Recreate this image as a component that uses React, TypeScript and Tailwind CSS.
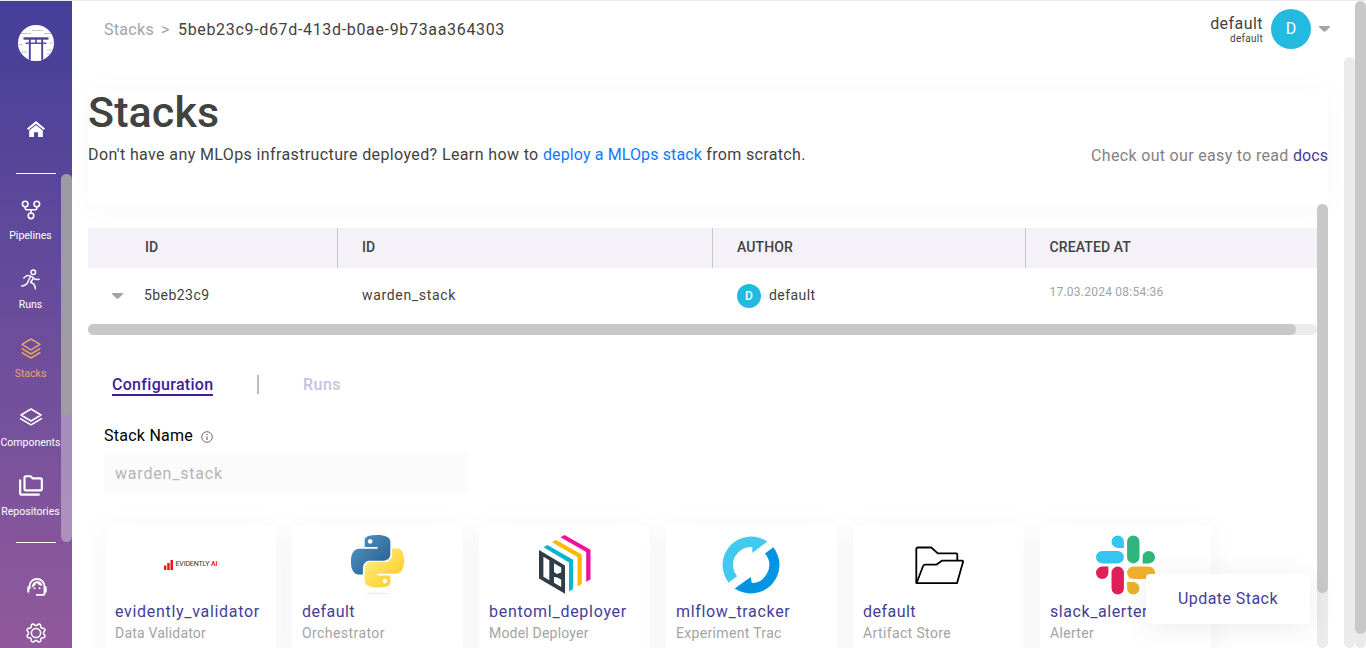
import type { ReactNode } from "react";
import { MdOutlineFolderCopy } from "react-icons/md";

function Logo() {
  return (
    <svg width="36" height="36" viewBox="0 0 36 36" className="block">
      <circle cx="18" cy="18" r="18" fill="#fff" />
      <g stroke="#4d429b" fill="none">
        <path d="M14 5.5h11M3 8.5h10M26 8.500h7M1 19.500h4M31 18h4M28.500 25h6M3 27h6M29 29h3" strokeWidth=".7" opacity=".5" />
        <path d="M5.500 13.500h25" strokeWidth="2.400" />
        <path d="M7.500 18.200h21" strokeWidth="1.400" />
        <path d="M11.800 14v20.700M24.200 14v20.700" strokeWidth="1.900" />
        <path d="M18 14v4" strokeWidth="1.600" />
      </g>
      <path d="M13.200 19.500h9.600V35.500h-9.600z" fill="#fff" />
    </svg>
  );
}

function HomeIcon() {
  return (
    <svg width="18" height="16" viewBox="0 0 18 16" fill="#fff">
      <path d="M9 0 0 7.500l1.300 1.500L9 2.700 16.700 9 18 7.500z" />
      <path d="M2.200 9.600 9 4.100l6.800 5.500V16h-4.700v-4.800H7V16H2.200z" />
    </svg>
  );
}

function PipelinesIcon() {
  return (
    <svg width="20" height="20" viewBox="0 0 20 20" fill="none" stroke="#fff" strokeWidth="1.600">
      <circle cx="4.200" cy="4" r="2.800" />
      <circle cx="15.800" cy="4" r="2.800" />
      <circle cx="10" cy="15.800" r="2.800" />
      <path d="M4.200 6.800v1.400c0 1 .6 1.600 1.600 1.600h8.400c1 0 1.600-.6 1.600-1.600V6.800M10 9.800V13" />
    </svg>
  );
}

function RunsIcon() {
  return (
    <svg width="20" height="21" viewBox="0 0 20 21" fill="none" stroke="#fff" strokeWidth="1.500" strokeLinecap="round" strokeLinejoin="round">
      <circle cx="12.300" cy="3.200" r="2.300" />
      <path d="M2.800 9 5.500 6.700c1-.6 2.300-.3 3.600.2 1.800.7 3 1.400 4 2.600 1 1 2.600 1.200 5 .7" />
      <path d="M9.500 7.500 7.300 12c-.8 2.300-2.300 4.800-6.600 4.900" />
      <path d="M12.300 9.500 9.500 13.500c3 .4 4.500 2 4.900 6.200" />
    </svg>
  );
}

function StacksIcon() {
  return (
    <svg width="20" height="21" viewBox="0 0 20 21" fill="none" stroke="#e8a561" strokeWidth="1.500" strokeLinejoin="round">
      <path d="M10 1 19 6.400 10 11.800 1 6.400z" />
      <path d="M.6 10.300 10 16l9.400-5.700M.6 14.300 10 20l9.400-5.700" />
    </svg>
  );
}

function ComponentsIcon() {
  return (
    <svg width="24" height="18" viewBox="0 0 24 18" fill="none" stroke="#fff" strokeWidth="1.500" strokeLinejoin="round">
      <path d="M12 1 22 7 12 13 2 7z" />
      <path d="M1 10.300 12 16.800l11-6.500" />
    </svg>
  );
}

function SupportIcon() {
  return (
    <svg width="20" height="18" viewBox="0 0 20 18" fill="none" stroke="#fff" className="block shrink-0">
      <path d="M2.500 11V8.500C2.500 4 5.800 1 10 1s7.500 3 7.500 7.500V15c0 1.200-.6 1.900-1.800 1.900H9" strokeWidth="1.900" />
      <path d="M1.300 9.200v4.600M18.700 9.200v4.600" strokeWidth="2" strokeLinecap="round" />
      <path d="M4.600 9.500C5 5.500 7.300 3.200 10.300 3.200c2.700 0 4.800 1.700 5.200 4.600-2.600 0-4.500-1.100-5.800-3.200C8.900 7 7.200 8.700 4.600 9.500z" fill="#fff" stroke="none" />
      <circle cx="7.500" cy="10.200" r="1" fill="#fff" stroke="none" />
      <circle cx="12.600" cy="10.200" r="1" fill="#fff" stroke="none" />
    </svg>
  );
}

// Outline of an eight-lobed cog centred on the origin.
const cogPath =
  Array.from({ length: 96 }, (_, i) => {
    const a = (i / 96) * Math.PI * 2;
    const wave = Math.max(-1, Math.min(1, 1.5 * Math.cos(8 * (a - Math.PI / 8))));
    const r = 8.5 + 0.95 * wave;
    return `${i ? "L" : "M"}${(r * Math.cos(a)).toFixed(2)} ${(r * Math.sin(a)).toFixed(2)}`;
  }).join("") + "Z";

function GearIcon() {
  return (
    <svg width="22" height="22" viewBox="-11 -11 22 22" fill="none" stroke="#fff" strokeWidth="1.500" strokeLinejoin="round" className="block shrink-0">
      <path d={cogPath} />
      <circle r="4.600" />
    </svg>
  );
}

function EvidentlyLogo() {
  return (
    <div className="flex h-[60px] w-[54px] items-center gap-[3px]">
      <svg width="9" height="10" viewBox="0 0 9 10" fill="#f5141b" className="shrink-0">
        <path d="M0 5.500h2.300V10H0zM3.200 3h2.500v7H3.200zM6.500 0H9v10H6.500z" />
      </svg>
      <span className="text-[7px] leading-none tracking-[-0.15px] whitespace-nowrap text-[#333]">
        EVIDENTLY <span className="font-medium text-[#ed0500]">AI</span>
      </span>
    </div>
  );
}

function PythonLogo() {
  return (
    <svg width="53" height="60" viewBox="0 0 24 27.200">
      <defs>
        <linearGradient id="pyBlue" x1="0" y1="0" x2="1" y2="1">
          <stop offset=".1" stopColor="#4f93c4" />
          <stop offset=".8" stopColor="#2b6595" />
        </linearGradient>
        <linearGradient id="pyYellow" x1="0" y1="0" x2="1" y2="1">
          <stop offset=".2" stopColor="#ffe873" />
          <stop offset=".8" stopColor="#ffd130" />
        </linearGradient>
      </defs>
      <ellipse cx="12" cy="26.500" rx="5.200" ry=".4" fill="#ececec" />
      <path fill="url(#pyBlue)" d="M14.25.18l.9.2.73.26.59.3.45.32.34.34.25.34.16.33.1.3.04.26.02.2-.01.13V8.5l-.05.63-.13.55-.21.46-.26.38-.3.31-.33.25-.35.19-.35.14-.33.1-.3.07-.26.04-.21.02H8.77l-.69.05-.59.14-.5.22-.41.27-.33.32-.27.35-.2.36-.15.37-.1.35-.07.32-.04.27-.02.21v3.06H3.17l-.21-.03-.28-.07-.32-.12-.35-.18-.36-.26-.36-.36-.35-.46-.32-.59-.28-.73-.21-.88-.14-1.05-.05-1.23.06-1.22.16-1.04.24-.87.32-.71.36-.57.4-.44.42-.33.42-.24.4-.16.36-.1.32-.05.24-.01h.16l.06.01h8.16v-.83H6.18l-.01-2.75-.02-.37.05-.34.11-.31.17-.28.25-.26.31-.23.38-.2.44-.18.51-.15.58-.12.64-.1.71-.06.77-.04.84-.02 1.27.05zm-6.3 1.98l-.23.33-.08.41.08.41.23.34.33.22.41.09.41-.09.33-.22.23-.34.08-.41-.08-.41-.23-.33-.33-.22-.41-.09-.41.09z" />
      <path fill="url(#pyYellow)" d="M21.04 5.9l.28.06.32.12.35.18.36.27.36.35.35.47.32.59.28.73.21.88.14 1.04.05 1.23-.06 1.23-.16 1.04-.24.86-.32.71-.36.57-.4.45-.42.33-.42.24-.4.16-.36.09-.32.05-.24.02-.16-.01h-8.22v.82h5.84l.01 2.76.02.36-.05.34-.11.31-.17.29-.25.25-.31.24-.38.2-.44.17-.51.15-.58.13-.64.09-.71.07-.77.04-.84.01-1.27-.04-1.07-.14-.9-.2-.73-.25-.59-.3-.45-.33-.34-.34-.25-.34-.16-.33-.1-.3-.04-.25-.02-.2.01-.13v-5.34l.05-.64.13-.54.21-.46.26-.38.3-.32.33-.24.35-.2.35-.14.33-.1.3-.06.26-.04.21-.02.13-.01h5.84l.69-.05.59-.14.5-.21.41-.28.33-.32.27-.35.2-.36.15-.36.1-.35.07-.32.04-.28.02-.21V6.07h2.09l.14.01zm-6.47 14.25l-.23.33-.08.41.08.41.23.33.33.23.41.08.41-.08.33-.23.23-.33.08-.41-.08-.41-.23-.33-.33-.23-.41-.08-.41.08z" />
    </svg>
  );
}

function BentoLogo() {
  return (
    <svg width="52" height="60" viewBox="0 0 52 60">
      <path fill="#ee1199" d="M21.500 2.300 25.500 0l26 14.700v29.800l-4.300 2.300V17z" />
      <path fill="#ffb800" d="M13 7.300 17 5l25.800 14.600V49l-4.300 2.400V22z" />
      <path fill="#06b6d4" d="M4.500 12.300 8.500 10l25.600 14.800V54L30 56.500V27.600z" />
      <path fill="#2f3d46" fillRule="evenodd" d="M0 15l26 15.500v28.200L0 43.500zM4.400 21.800v20l5.900 3.500V25.300zM15 28.300v8.800l2.900 1.800 4.300-1.500v-4.800zM15 42v5.800l7.200 4.200v-7.400l-3.900-2z" />
    </svg>
  );
}

function MlflowLogo() {
  return (
    <svg width="60" height="60" viewBox="-29 -30 60 60">
      <path fill="#43c9ed" d="M-22.300 17.700A28.500 28.500 0 0 1 16.300 -23.400L1.300 -12V-18A18 18 0 0 0 -14 11.300Z" />
      <path fill="#0194e2" d="M22.300 -17.700A28.500 28.500 0 0 1 -16.300 23.400L-.3 12 .8 18A18 18 0 0 0 14 -11.500Z" />
    </svg>
  );
}

function FolderLogo() {
  return (
    <svg width="50" height="60" viewBox="-1 -11 50 60" fill="none" stroke="#000" strokeWidth="1.800" strokeLinejoin="round">
      <path d="M1.300 37V3.200c0-1 .6-1.700 1.700-1.700h13.300L22.800 7.300h18.300c.8 0 1.200.4 1.200 1.200v6" />
      <path d="M1.500 37.200 8.100 20c.4-1 .9-1.400 2-1.400h11.500l5.700-4h19.700c.8 0 1.300.7 1 1.500l-6 21.100z" />
    </svg>
  );
}

function SlackLogo() {
  return (
    <svg width="59" height="60" viewBox="0 0 24 24">
      <path fill="#e01e5a" d="M5.042 15.165a2.528 2.528 0 0 1-2.52 2.523A2.528 2.528 0 0 1 0 15.165a2.527 2.527 0 0 1 2.522-2.52h2.52v2.52zM6.313 15.165a2.527 2.527 0 0 1 2.521-2.52 2.527 2.527 0 0 1 2.521 2.52v6.313A2.528 2.528 0 0 1 8.834 24a2.528 2.528 0 0 1-2.521-2.522v-6.313z" />
      <path fill="#36c5f0" d="M8.834 5.042a2.528 2.528 0 0 1-2.521-2.52A2.528 2.528 0 0 1 8.834 0a2.528 2.528 0 0 1 2.521 2.522v2.52H8.834zM8.834 6.313a2.528 2.528 0 0 1 2.521 2.521 2.528 2.528 0 0 1-2.521 2.521H2.522A2.528 2.528 0 0 1 0 8.834a2.528 2.528 0 0 1 2.522-2.521h6.312z" />
      <path fill="#2eb67d" d="M18.956 8.834a2.528 2.528 0 0 1 2.522-2.521A2.528 2.528 0 0 1 24 8.834a2.528 2.528 0 0 1-2.522 2.521h-2.522V8.834zM17.688 8.834a2.528 2.528 0 0 1-2.523 2.521 2.527 2.527 0 0 1-2.520-2.521V2.522A2.527 2.527 0 0 1 15.165 0a2.528 2.528 0 0 1 2.523 2.522v6.312z" />
      <path fill="#ecb22e" d="M15.165 18.956a2.528 2.528 0 0 1 2.523 2.522A2.528 2.528 0 0 1 15.165 24a2.527 2.527 0 0 1-2.520-2.522v-2.522h2.520zM15.165 17.688a2.527 2.527 0 0 1-2.520-2.523 2.526 2.526 0 0 1 2.520-2.520h6.313A2.527 2.527 0 0 1 24 15.165a2.528 2.528 0 0 1-2.522 2.523h-6.313z" />
    </svg>
  );
}

function Caret() {
  return (
    <svg width="11" height="6" viewBox="0 0 11 6" className="shrink-0" fill="#a3a3ad">
      <path d="M0 0h11v1L6.500 5.500h-2L0 1z" />
    </svg>
  );
}

function NavItem({ icon, label, active }: { icon: ReactNode; label: string; active?: boolean }) {
  return (
    <a className="flex h-[69px] w-[61px] flex-col items-center">
      <span className="flex h-6 items-center justify-center">{icon}</span>
      <span className={`mt-[7px] text-[10.5px] leading-[14px] ${active ? "text-[#e8a561]" : "text-white"}`}>{label}</span>
    </a>
  );
}

function Sidebar() {
  return (
    <aside className="flex h-full w-[72px] shrink-0 flex-col items-center overflow-hidden bg-linear-to-b from-[#443e99] to-[#91599c]">
      <div className="mt-6"><Logo /></div>
      <div className="mt-[60px]"><HomeIcon /></div>
      <div className="mt-9 h-px w-10 shrink-0 bg-white" />
      <nav className="flex h-[368px] w-full shrink-0">
        <div className="w-[61px] pt-6">
          <NavItem icon={<PipelinesIcon />} label="Pipelines" />
          <NavItem icon={<RunsIcon />} label="Runs" />
          <NavItem icon={<StacksIcon />} label="Stacks" active />
          <NavItem icon={<ComponentsIcon />} label="Components" />
          <NavItem icon={<MdOutlineFolderCopy size={26} color="#fff" />} label="Repositories" />
        </div>
        <div className="h-full w-[11px] rounded-full bg-[#ebebeb]/40">
          <div className="h-[242px] rounded-full bg-[#a0a09c]/75" />
        </div>
      </nav>
      <div className="h-px w-10 shrink-0 bg-white" />
      <div className="mt-[35px] ml-[2px] shrink-0"><SupportIcon /></div>
      <div className="mt-[26px] shrink-0"><GearIcon /></div>
    </aside>
  );
}

function Header() {
  return (
    <header className="flex h-14 items-center justify-between pt-px pr-[25px] pl-8">
      <div className="flex items-center pt-[3px] text-[16px] leading-5">
        <span className="w-[50px] tracking-[0.3px] text-[#a3a3ad]">Stacks</span>
        <span className="w-6 pl-[7px] text-[#a3a3ad]">&gt;</span>
        <span className="tracking-[0.667px] text-[#424240]">5beb23c9-d67d-413d-b0ae-9b73aa364303</span>
      </div>
      <div className="flex items-center">
        <div className="flex flex-col items-end pt-[2px] text-[#424240]">
          <span className="text-[16px] leading-[18px] tracking-[0.45px]">default</span>
          <span className="text-[10px] leading-[12px] tracking-[0.27px]">default</span>
        </div>
        <div className="mr-2 ml-2 flex size-10 items-center justify-center rounded-full bg-[#24badf] text-[16px] text-white">D</div>
        <Caret />
      </div>
    </header>
  );
}

function StackTable() {
  return (
    <div className="text-[14px] text-[#424240]">
      <div className="flex h-10 bg-[#f4f1f9] leading-[39px] font-medium">
        <div className="w-[249px] pl-[57px]">ID</div>
        <div className="w-[375px] border-l border-[#c8c8c8] pl-6">ID</div>
        <div className="w-[313px] border-l border-[#c8c8c8] pl-6 tracking-[0.12px]">AUTHOR</div>
        <div className="grow border-l border-[#c8c8c8] pl-[23.500px] tracking-[0.12px]">CREATED AT</div>
      </div>
      <div className="flex h-14 items-center">
        <div className="flex w-[249px] items-center pl-6">
          <Caret />
          <span className="ml-[21px] tracking-[0.44px]">5beb23c9</span>
        </div>
        <div className="w-[375px] pl-[25px] tracking-[0.67px]">warden_stack</div>
        <div className="flex w-[313px] items-center pl-[25px]">
          <span className="flex size-6 items-center justify-center rounded-full bg-[#24badf] text-[12px] font-medium text-white">D</span>
          <span className="ml-2 tracking-[0.43px]">default</span>
        </div>
        <div className="-mt-[7px] pl-[24.500px] text-[12px] tracking-[0.235px] text-[#a3a3a3]">17.03.2024 08:54:36</div>
      </div>
      <div className="h-[11px] rounded-full bg-[#ebebeb]">
        <div className="h-full w-[1208px] rounded-full bg-[#c8c8c8]" />
      </div>
    </div>
  );
}

const components: { name: string; type: string; logo: ReactNode; nameClass: string; typeClass: string }[] = [
  { name: "evidently_validator", type: "Data Validator", logo: <EvidentlyLogo />, nameClass: "tracking-[0.69px]", typeClass: "tracking-[0.2px]" },
  { name: "default", type: "Orchestrator", logo: <PythonLogo />, nameClass: "tracking-[0.47px]", typeClass: "tracking-[0.43px]" },
  { name: "bentoml_deployer", type: "Model Deployer", logo: <BentoLogo />, nameClass: "tracking-[0.72px]", typeClass: "tracking-[0.2px]" },
  { name: "mlflow_tracker", type: "Experiment Trac", logo: <MlflowLogo />, nameClass: "tracking-[0.67px]", typeClass: "tracking-[0.33px]" },
  { name: "default", type: "Artifact Store", logo: <FolderLogo />, nameClass: "tracking-[0.47px]", typeClass: "tracking-[0.37px]" },
  { name: "slack_alerter", type: "Alerter", logo: <SlackLogo />, nameClass: "tracking-[0.57px]", typeClass: "tracking-[0.32px]" },
];

function ComponentCard({ name, type, logo, nameClass, typeClass }: (typeof components)[number]) {
  return (
    <div className="h-[140px] w-[171px] shrink-0 rounded-sm bg-white pt-[10px] shadow-[0_4px_30px_rgba(0,0,0,0.05)]">
      <div className="flex h-[60px] justify-center">{logo}</div>
      <div className="pl-[10px]">
        <div className={`mt-[7px] text-[16px] leading-5 text-[#443e99] ${nameClass}`}>{name}</div>
        <div className={`mt-px text-[14px] leading-5 text-[#a3a3a3] ${typeClass}`}>{type}</div>
      </div>
    </div>
  );
}

function Configuration() {
  return (
    <div className="pl-4">
      <div className="mt-[39px] flex items-start pl-2 text-[16px] font-medium">
        <span className="h-[22px] w-[101px] border-b-2 border-[#431d93] leading-[22px] tracking-[0.3px] whitespace-nowrap text-[#431d93]">Configuration</span>
        <span className="mt-[1px] ml-11 h-[19px] w-[2px] bg-[#bcbcbc]" />
        <span className="ml-11 leading-[22px] tracking-[0.47px] text-[#c6c3e0]">Runs</span>
      </div>
      <div className="mt-[30px] flex items-center text-[16px] leading-5">
        <span className="w-[97px] tracking-[0.25px] text-black">Stack Name</span>
        <svg width="12" height="12" viewBox="0 0 12 12" fill="none" stroke="#6b6b76" className="mt-[3px]">
          <circle cx="6" cy="6" r="5.300" />
          <path d="M6 5.400V9M6 3v1.200" strokeWidth="1.200" />
        </svg>
      </div>
      <div className="mt-[7px] flex h-10 w-[364px] items-center rounded bg-[#fbfbfb] pt-[2px] pl-[11px] text-[16px] tracking-[0.81px] text-[#b5b5b5]">warden_stack</div>
      <div className="mt-8 flex gap-4 pl-px">
        {components.map((c) => (
          <ComponentCard key={c.type} {...c} />
        ))}
      </div>
    </div>
  );
}

export default function App() {
  return (
    <div className="relative flex h-[648px] w-[1366px] overflow-hidden border-t border-[#e8e8ef] bg-white font-['Roboto',sans-serif]">
      <Sidebar />
      <div className="flex min-w-0 grow flex-col">
        <Header />
        <div className="flex min-h-0 grow">
          <main className="flex w-[1272px] flex-col pr-4 pl-4">
            <section className="mt-[33px] flex h-[115px] shrink-0 flex-col shadow-[0_4px_30px_rgba(0,0,0,0.03)]">
              <h1 className="text-[43px] leading-[46px] font-medium tracking-[0.1px] text-[#424240]">Stacks</h1>
              <div className="mt-[10px] flex justify-between text-[16px] leading-5">
                <p className="text-[#424240]">
                  <span className="tracking-[0.38px]">Don't have any MLOps infrastructure deployed? Learn how to </span>
                  <span className="tracking-[0.12px] text-[#0d7bff]">deploy a MLOps stack</span>
                  <span className="tracking-[0.34px]"> from scratch.</span>
                </p>
                <p className="mt-px tracking-[0.32px] text-[#828282]">
                  Check out our easy to read <span className="tracking-[0.05px] text-[#443e99]">docs</span>
                </p>
              </div>
            </section>
            <div className="flex min-h-0 grow">
              <div className="w-[1229px] shrink-0 overflow-hidden pt-6">
                <StackTable />
                <Configuration />
              </div>
              <div className="w-[11px] rounded-full bg-[#ebebeb]">
                <div className="h-[389px] rounded-full bg-[#c8c8c8]" />
              </div>
            </div>
          </main>
          <div className="mt-px w-[11px] rounded-full bg-[#ebebeb]" />
        </div>
      </div>
      <div className="w-[11px] shrink-0 rounded-full bg-[#ebebeb]">
        <div className="h-[633px] rounded-full bg-[#c8c8c8]" />
      </div>
      <button className="absolute top-[573px] left-[1146px] h-[50px] w-[164px] rounded bg-white text-[16px] tracking-[0.44px] text-[#443e99] shadow-[0_4px_30px_rgba(0,0,0,0.08)]">
        Update Stack
      </button>
    </div>
  );
}
